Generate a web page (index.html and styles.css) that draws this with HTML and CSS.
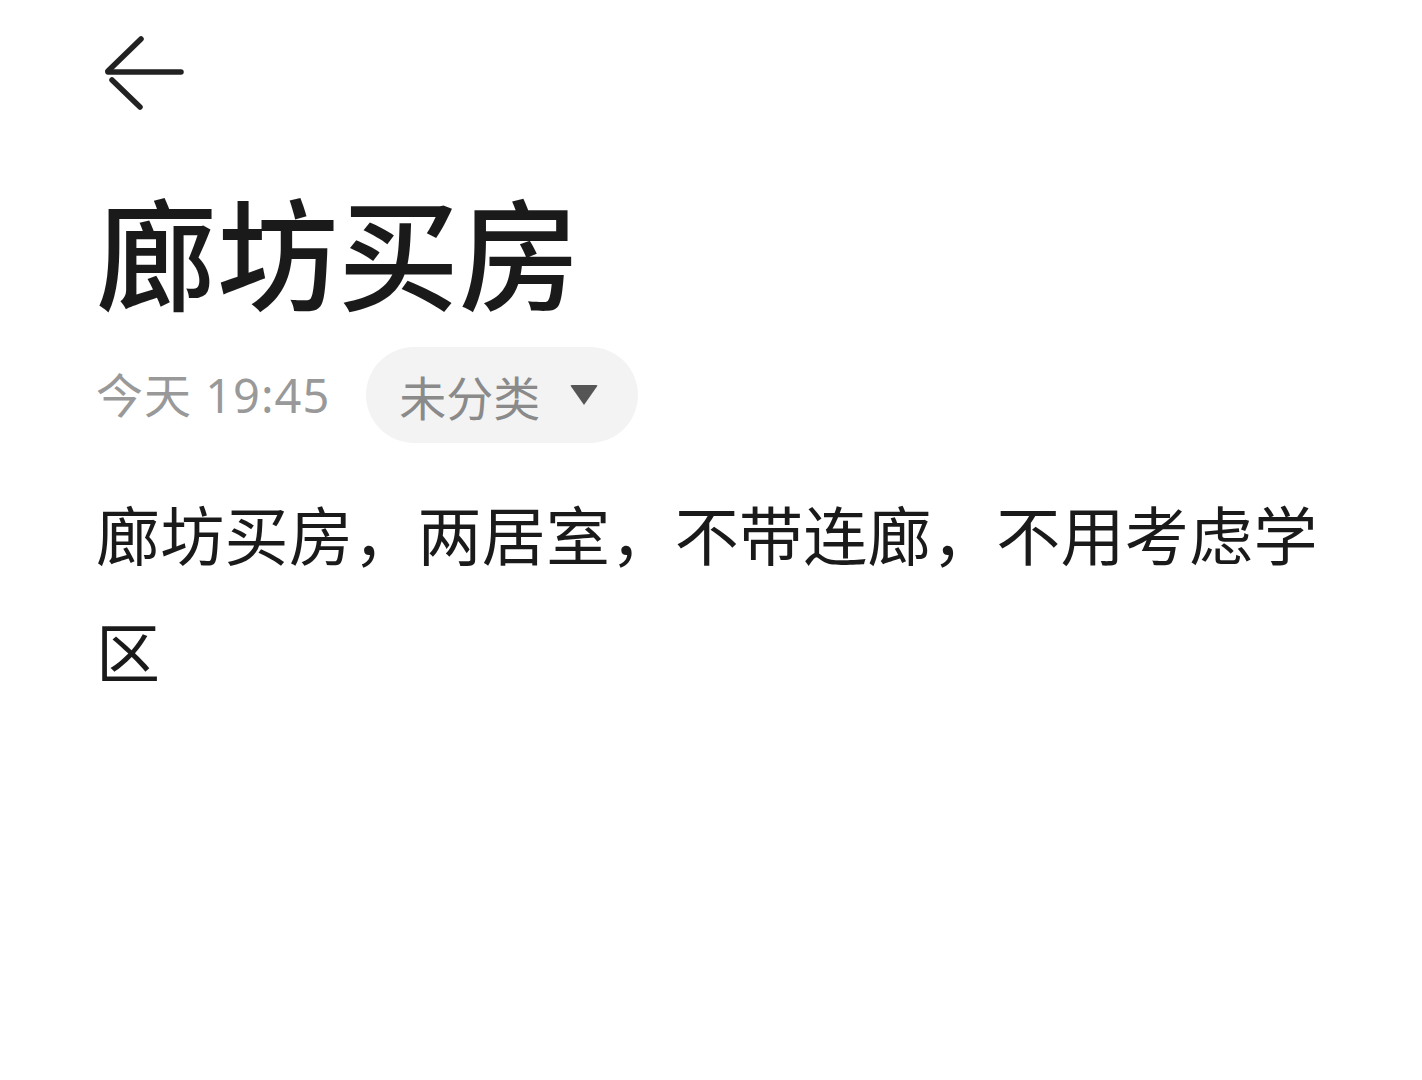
FILE: index.html
```html
<!DOCTYPE html>
<html lang="zh-CN">
<head>
<meta charset="utf-8">
<title>廊坊买房</title>
<link rel="stylesheet" href="styles.css">
</head>
<body>
<div class="page">
  <header class="topbar">
    <button class="back" aria-label="返回">
      <svg width="84" height="76" viewBox="0 0 84 76" fill="none" stroke="#222" stroke-width="5.5" stroke-linecap="round" stroke-linejoin="round">
        <path d="M79 36 H6"/>
        <path d="M39 3 L6 35"/>
        <path d="M10 44 L38 71"/>
      </svg>
    </button>
  </header>
  <h1 class="title">廊坊买房</h1>
  <div class="meta">
    <span class="time">今天 19:45</span>
    <span class="category">未分类<span class="caret"></span></span>
  </div>
  <p class="content">廊坊买房，两居室，不带连廊，不用考虑学区</p>
</div>
</body>
</html>
```

FILE: styles.css
```css
html, body {
  margin: 0;
  padding: 0;
  background: #ffffff;
}
body {
  font-family: "Noto Sans", "Noto Sans CJK SC", sans-serif;
  color: #1a1a1a;
}
.page {
  padding: 0 100px 0 96px;
}
.topbar {
  height: 178px;
  padding-top: 36px;
  box-sizing: border-box;
}
.back {
  display: block;
  margin: 0 0 0 6px;
  padding: 0;
  border: 0;
  background: none;
  width: 84px;
  height: 76px;
}
.back svg {
  display: block;
}
.title {
  margin: 0;
  font-family: "Noto Sans CJK SC", sans-serif;
  font-size: 121px;
  font-weight: 500;
  line-height: 142px;
  color: #1a1a1a;
  letter-spacing: 0;
}
.meta {
  margin-top: 27px;
  display: flex;
  align-items: center;
  gap: 36px;
  height: 96px;
}
.time {
  font-family: "Noto Sans", "Noto Sans CJK SC", sans-serif;
  font-size: 47px;
  letter-spacing: 1px;
  color: #999999;
  line-height: 1;
}
.category {
  display: flex;
  align-items: center;
  height: 96px;
  padding: 0 40px 0 33px;
  border-radius: 48px;
  background: #f3f3f3;
  font-family: "Noto Sans CJK SC", sans-serif;
  font-size: 47px;
  color: #8a8a8a;
  line-height: 1;
}
.caret {
  width: 0;
  height: 0;
  margin-left: 30px;
  border-left: 14px solid transparent;
  border-right: 14px solid transparent;
  border-top: 20px solid #555555;
  border-radius: 2px;
}
.content {
  margin: 31px 0 0 0;
  font-family: "Noto Sans CJK SC", sans-serif;
  font-size: 64px;
  letter-spacing: 0.3px;
  line-height: 117px;
  color: #1a1a1a;
}
```
